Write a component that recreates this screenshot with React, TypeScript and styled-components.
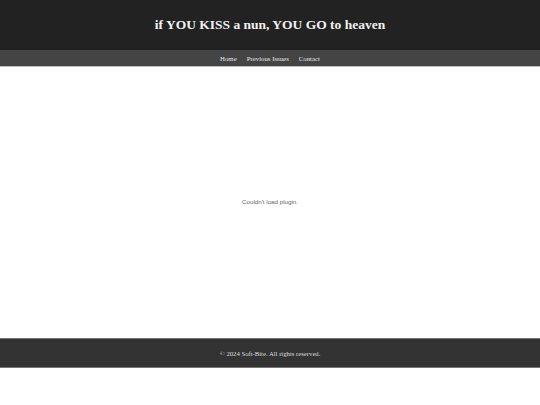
import React from "react";
import styled, { createGlobalStyle } from "styled-components";

const Global = createGlobalStyle`
  html, body { margin: 0; padding: 0; background: #fff; }
  body { font-family: "Liberation Serif", "Times New Roman", serif; }
`;

const Header = styled.header`
  background: #222;
  height: 50px;
  display: flex;
  align-items: center;
  justify-content: center;
`;

const Title = styled.h1`
  margin: 0;
  color: #f2f2f2;
  font-size: 13.5px;
  font-weight: bold;
  font-family: "Liberation Serif", serif;
`;

const Nav = styled.nav`
  background: #444;
  height: 16px;
  border-bottom: 1px solid #bbb;
  display: flex;
  align-items: center;
  justify-content: center;
  gap: 10px;
`;

const NavLink = styled.a`
  color: #e6e6e6;
  font-size: 6.8px;
  text-decoration: none;
`;

const Main = styled.main`
  height: 271px;
  display: flex;
  align-items: center;
  justify-content: center;
`;

const PluginMsg = styled.div`
  font-family: "Liberation Sans", Arial, sans-serif;
  font-size: 6.2px;
  color: #666;
  margin-bottom: 3px;
`;

const Footer = styled.footer`
  background: #333;
  height: 28px;
  border-top: 1px solid #777;
  border-bottom: 1px solid #777;
  display: flex;
  align-items: center;
  justify-content: center;
  color: #ddd;
  font-size: 6.7px;
`;

export default function App() {
  return (
    <>
      <Global />
      <Header>
        <Title>if YOU KISS a nun, YOU GO to heaven</Title>
      </Header>
      <Nav>
        <NavLink href="#">Home</NavLink>
        <NavLink href="#">Previous Issues</NavLink>
        <NavLink href="#">Contact</NavLink>
      </Nav>
      <Main>
        <PluginMsg>Couldn't load plugin.</PluginMsg>
      </Main>
      <Footer>© 2024 Soft-Bite. All rights reserved.</Footer>
    </>
  );
}
